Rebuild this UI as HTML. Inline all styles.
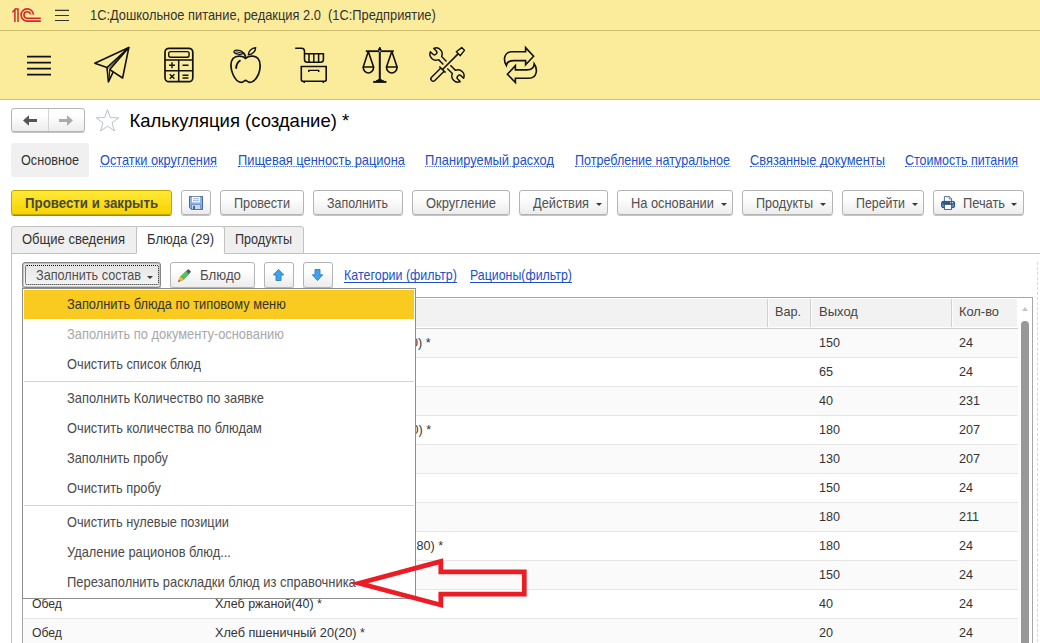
<!DOCTYPE html>
<html><head><meta charset="utf-8"><title>1C</title>
<style>
*{box-sizing:border-box;margin:0;padding:0}
html,body{width:1040px;height:643px;overflow:hidden;background:#fff;font-family:"Liberation Sans",sans-serif;font-size:13.9px;color:#3c3c3c}
.abs{position:absolute}
.sx{display:inline-block;transform-origin:0 50%;white-space:pre}
.sd{display:inline-block;transform-origin:0 50%;transform:scaleX(0.941)}
.sr{display:inline-block;transform-origin:100% 50%;transform:scaleX(0.941)}
svg{position:absolute;overflow:visible}
#titlebar{position:absolute;left:0;top:0;width:1040px;height:31px;background:#fbec9c;border-bottom:1px solid #cbbb6c}
#titlebar .t{position:absolute;left:90px;top:7.3px;font-size:13.9px;color:#333;white-space:pre}
#sections{position:absolute;left:0;top:31px;width:1040px;height:69px;background:#fbec9c;border-bottom:1px solid #cabd7e}
.btn{position:absolute;height:25px;border:1px solid #b4b4b4;border-radius:3px;background:linear-gradient(#ffffff 30%,#ececec);box-shadow:0 1px 0 #c4c4c4;}
.bt{position:absolute;margin-top:0.6px;font-size:13.9px;color:#505050;white-space:nowrap;line-height:15px}
.lnk{position:absolute;top:152.7px;font-size:13.9px;color:#2050c8;white-space:nowrap;line-height:15px;height:14.3px}
.lnk .sx{border-bottom:1px dotted #2050c8;height:14.3px}
.lnk2 .sx{text-decoration:underline;text-decoration-skip-ink:none;text-decoration-thickness:1px;text-underline-offset:1.5px}
.lnk2{position:absolute;top:267.6px;font-size:13.9px;color:#2050c8;white-space:nowrap;text-decoration:underline;line-height:15px}
.caret{position:absolute;width:0;height:0;border-left:3px solid transparent;border-right:3px solid transparent;border-top:3px solid #3a3a3a;margin-top:1.4px;margin-left:0.3px}
.tab{position:absolute;top:226px;height:28px;border:1px solid #c2c2c2;background:#efefef}
.row{position:absolute;left:23px;width:995px;height:29px;border-bottom:1px solid #e6e6e6;font-size:13.4px;color:#333}
.row>span{position:absolute;top:6.45px;white-space:nowrap;line-height:15px}
.hd{margin-top:-0.64px;font-size:13.4px;color:#444;white-space:nowrap;line-height:15px}
.mi{position:absolute;left:67px;margin-top:0.6px;font-size:13.9px;color:#4a4a4a;white-space:nowrap;line-height:15px}
</style></head><body>
<div id="titlebar"><div class="t"><span class="sx" style="transform:scaleX(0.9251)">1С:Дошкольное питание, редакция 2.0  (1С:Предприятие)</span></div></div>
<div id="sections"></div>
<div class="btn" style="left:11px;top:108px;width:74px;height:24px"></div>
<div class="abs" style="left:48px;top:109px;width:1px;height:22px;background:#d4d4d4"></div>
<div class="abs" style="left:129.5px;top:110px;font-size:18.5px;color:#000;white-space:nowrap;line-height:22px">Калькуляция (создание) *</div>
<div class="abs" style="left:11px;top:143px;width:78px;height:34px;background:#f0f0f0;border-radius:3px"></div>
<div class="bt" style="left:21px;top:152px;color:#333"><span class="sx" style="transform:scaleX(0.9107)">Основное</span></div>
<div class="lnk" style="left:100px"><span class="sx" style="transform:scaleX(0.9185)">Остатки округления</span></div>
<div class="lnk" style="left:238px"><span class="sx" style="transform:scaleX(0.9253)">Пищевая ценность рациона</span></div>
<div class="lnk" style="left:425px"><span class="sx" style="transform:scaleX(0.9261)">Планируемый расход</span></div>
<div class="lnk" style="left:575px"><span class="sx" style="transform:scaleX(0.9029)">Потребление натуральное</span></div>
<div class="lnk" style="left:750px"><span class="sx" style="transform:scaleX(0.9245)">Связанные документы</span></div>
<div class="lnk" style="left:905px"><span class="sx" style="transform:scaleX(0.8993)">Стоимость питания</span></div>
<div class="btn" style="left:11px;top:190px;width:161px;background:linear-gradient(#ffe838,#f7d400);border-color:#c4a600;box-shadow:0 1px 0 #a08800"></div>
<div class="bt" style="left:25px;top:195px;font-weight:bold;color:#4a4838;font-size:14px"><span class="sx" style="transform:scaleX(0.948)">Провести и закрыть</span></div>
<div class="btn" style="left:181px;top:190px;width:30px"></div>
<div class="btn" style="left:220px;top:190px;width:84px"></div>
<div class="bt" style="left:234px;top:195px"><span class="sx" style="transform:scaleX(0.9107)">Провести</span></div>
<div class="btn" style="left:313px;top:190px;width:90px"></div>
<div class="bt" style="left:327px;top:195px"><span class="sx" style="transform:scaleX(0.8939)">Заполнить</span></div>
<div class="btn" style="left:412px;top:190px;width:98px"></div>
<div class="bt" style="left:426px;top:195px"><span class="sx" style="transform:scaleX(0.9309)">Округление</span></div>
<div class="btn" style="left:519px;top:190px;width:89px"></div>
<div class="bt" style="left:533px;top:195px"><span class="sx" style="transform:scaleX(0.9195)">Действия</span></div>
<div class="caret" style="left:596px;top:202px"></div>
<div class="btn" style="left:617px;top:190px;width:116px"></div>
<div class="bt" style="left:631px;top:195px"><span class="sx" style="transform:scaleX(0.9234)">На основании</span></div>
<div class="caret" style="left:721px;top:202px"></div>
<div class="btn" style="left:742px;top:190px;width:91px"></div>
<div class="bt" style="left:756px;top:195px"><span class="sx" style="transform:scaleX(0.9076)">Продукты</span></div>
<div class="caret" style="left:820px;top:202px"></div>
<div class="btn" style="left:842px;top:190px;width:82px"></div>
<div class="bt" style="left:856px;top:195px"><span class="sx" style="transform:scaleX(0.8896)">Перейти</span></div>
<div class="caret" style="left:912px;top:202px"></div>
<div class="btn" style="left:933px;top:190px;width:91px"></div>
<div class="bt" style="left:963px;top:195px"><span class="sx" style="transform:scaleX(0.9224)">Печать</span></div>
<div class="caret" style="left:1011px;top:202px"></div>
<div class="abs" style="left:11px;top:253px;width:1029px;height:400px;border-top:1px solid #c2c2c2;border-left:1px solid #c2c2c2"></div>
<div class="tab" style="left:11px;width:126px;border-radius:3px 0 0 0"></div>
<div class="tab" style="left:224px;width:80px;border-radius:0 3px 0 0"></div>
<div class="tab" style="left:136px;width:89px;background:#fff;border-bottom-color:#fff;border-radius:3px 3px 0 0"></div>
<div class="bt" style="left:22px;top:231.6px;color:#333"><span class="sx" style="transform:scaleX(0.9365)">Общие сведения</span></div>
<div class="bt" style="left:147px;top:231.6px;color:#333"><span class="sx" style="transform:scaleX(0.9355)">Блюда (29)</span></div>
<div class="bt" style="left:235px;top:231.6px;color:#333"><span class="sx" style="transform:scaleX(0.9076)">Продукты</span></div>
<div class="btn" style="left:22px;top:262px;height:25.5px;width:139px;border-color:#858585;box-shadow:0 1px 0 #9a9a9a,inset 0 0 0 0.5px #a0a0a0;background:linear-gradient(#e4e4e4,#f6f6f6)"></div>
<div class="abs" style="left:25px;top:265px;width:134px;height:20px;border:1px dotted #111;border-radius:2px"></div>
<div class="bt" style="left:36px;top:267.3px"><span class="sx" style="transform:scaleX(0.9114)">Заполнить состав</span></div><div class="caret" style="left:147px;top:274.4px"></div>
<div class="btn" style="left:170px;top:262px;height:25.5px;width:85px"></div><div class="bt" style="left:200px;top:267.3px"><span class="sx" style="transform:scaleX(0.9526)">Блюдо</span></div>
<div class="btn" style="left:264px;top:262px;height:25.5px;width:30px"></div>
<div class="btn" style="left:303px;top:262px;height:25.5px;width:30px"></div>
<div class="lnk2" style="left:344px"><span class="sx" style="transform:scaleX(0.8975)">Категории (фильтр)</span></div>
<div class="lnk2" style="left:470px"><span class="sx" style="transform:scaleX(0.8909)">Рационы(фильтр)</span></div>
<div class="abs" style="left:22px;top:297px;width:1011px;height:350px;border:1px solid #a6a6a6;border-bottom:none"></div>
<div class="abs" style="left:23px;top:299px;width:994px;height:28px;background:#f2f2f2"></div><div class="abs" style="left:23px;top:328px;width:995px;height:1px;background:#cfcfcf"></div>
<div class="abs" style="left:767px;top:299px;width:1px;height:28px;background:#d0d0d0"></div><div class="abs" style="left:768px;top:299px;width:1px;height:28px;background:#fcfcfc"></div>
<div class="abs" style="left:810px;top:299px;width:1px;height:28px;background:#d0d0d0"></div><div class="abs" style="left:811px;top:299px;width:1px;height:28px;background:#fcfcfc"></div>
<div class="abs" style="left:951px;top:299px;width:1px;height:28px;background:#d0d0d0"></div><div class="abs" style="left:952px;top:299px;width:1px;height:28px;background:#fcfcfc"></div>
<div class="abs hd" style="left:775px;top:305px"><span class="sx" style="transform:scaleX(0.9432)">Вар.</span></div><div class="abs hd" style="left:819px;top:305px"><span class="sx" style="transform:scaleX(0.9727)">Выход</span></div><div class="abs hd" style="left:959px;top:305px"><span class="sx" style="transform:scaleX(0.9600)">Кол-во</span></div>
<div class="row" style="top:329px;background:#fafafa"><span class="sr" style="right:587px">Каша молочная (150) *</span><span class="sd" style="left:796px">150</span><span class="sd" style="left:936px">24</span></div>
<div class="row" style="top:358px;background:#fff"><span class="sd" style="left:796px">65</span><span class="sd" style="left:936px">24</span></div>
<div class="row" style="top:387px;background:#fafafa"><span class="sd" style="left:796px">40</span><span class="sd" style="left:936px">231</span></div>
<div class="row" style="top:416px;background:#fff"><span class="sr" style="right:587px">Чай с сахаром (180) *</span><span class="sd" style="left:796px">180</span><span class="sd" style="left:936px">207</span></div>
<div class="row" style="top:445px;background:#fafafa"><span class="sd" style="left:796px">130</span><span class="sd" style="left:936px">207</span></div>
<div class="row" style="top:474px;background:#fff"><span class="sd" style="left:796px">150</span><span class="sd" style="left:936px">24</span></div>
<div class="row" style="top:503px;background:#fafafa"><span class="sd" style="left:796px">180</span><span class="sd" style="left:936px">211</span></div>
<div class="row" style="top:532px;background:#fff"><span class="sr" style="right:575px">Компот из сухофруктов(180) *</span><span class="sd" style="left:796px">180</span><span class="sd" style="left:936px">24</span></div>
<div class="row" style="top:561px;background:#fafafa"><span class="sd" style="left:796px">150</span><span class="sd" style="left:936px">24</span></div>
<div class="row" style="top:590px;background:#fff"><span style="left:9px"><span class="sx" style="transform:scaleX(0.9112)">Обед</span></span><span style="left:192px"><span class="sx" style="transform:scaleX(0.9351)">Хлеб ржаной(40) *</span></span><span class="sd" style="left:796px">40</span><span class="sd" style="left:936px">24</span></div>
<div class="row" style="top:619px;background:#fafafa"><span style="left:9px"><span class="sx" style="transform:scaleX(0.9112)">Обед</span></span><span style="left:192px"><span class="sx" style="transform:scaleX(0.9452)">Хлеб пшеничный 20(20) *</span></span><span class="sd" style="left:796px">20</span><span class="sd" style="left:936px">24</span></div>
<div class="abs" style="left:1021px;top:321px;width:8px;height:330px;background:#989898;border-radius:4px"></div>
<div class="abs" style="left:1022px;top:307px;width:0;height:0;border-left:3px solid transparent;border-right:3px solid transparent;border-bottom:4px solid #c4c4c4"></div>
<div class="abs" style="left:1037px;top:262px;width:0;height:390px;border-left:1px dashed #d8d8d8"></div>
<!-- 1C logo -->
<svg style="left:0;top:0" width="90" height="30" fill="none" stroke="#d8232a" stroke-width="1.6">
<path d="M12.4 12.2 L14.9 9.6 L14.9 21.9 M18 8.3 L18 21.9 M14.6 9 L18 9" stroke-width="1.5"/>
<path d="M33.4 14.8 A6.15 6.15 0 1 0 27.3 21.15 L40.8 21.15"/>
<path d="M30.5 14.4 A3.3 3.3 0 1 0 27.3 18.3 L40.8 18.3"/>
</svg>
<!-- small hamburger -->
<svg style="left:0;top:0" width="90" height="30" stroke="#333" stroke-width="1.2"><path d="M55 10.4H69M55 15.5H69M55 20.5H69"/></svg>
<!-- big hamburger -->
<svg style="left:0;top:31px" width="80" height="69" stroke="#111" stroke-width="1.8"><path d="M27 25.7H51M27 31.7H51M27 37.7H51M27 43.7H51"/></svg>
<!-- paper plane -->
<svg style="left:0;top:0" width="140" height="100" fill="none" stroke="#111" stroke-width="1.6" stroke-linejoin="round">
<path d="M128.8 47.6 L94.8 63.2 L107 67.6 Z"/>
<path d="M128.8 47.6 L109.8 69.6 L122.6 78 Z"/>
<path d="M107 67.6 L108.4 82 L113.2 71.9" />
<path d="M109.8 69.6 L109 79.5" stroke-width="1.1"/>
<path d="M127.5 49.2 L108.5 68.6" stroke-width="0.6"/>
</svg>
<!-- calculator -->
<svg style="left:0;top:0" width="200" height="100" fill="none" stroke="#111" stroke-width="1.7">
<rect x="165" y="48.3" width="27.8" height="33.4" rx="4"/>
<rect x="168.7" y="51.6" width="20.4" height="5.6" rx="2" stroke-width="1.4"/>
<path d="M165 60H192.8M165 70.8H192.8M178.7 60V81.7" stroke-width="1.5"/>
<path d="M169 65.3H175M172 62.3V68.3 M182.5 65.3H188.5 M169.8 74.2L174.4 78.8M174.4 74.2L169.8 78.8 M182.5 75.2H188.5M182.5 78H188.5" stroke-width="1.4"/>
</svg>
<!-- apple -->
<svg style="left:0;top:0" width="270" height="100" fill="none" stroke="#14141c" stroke-width="1.75" stroke-linecap="round">
<path d="M245.6 58.4 C243 56 236.5 55 233 58.5 C230 62 230.5 69 233 74.5 C235 79 238 82.5 241.5 82.3 C243.5 82.2 244.5 80.4 245.6 80.4 C246.7 80.4 247.7 82.2 249.7 82.3 C253.2 82.5 256.2 79 258.4 74.5 C260.6 69 261 62 258 58.5 C254.7 55 248.2 56 245.6 58.4 Z"/>
<path d="M245.5 58.2 C245.6 55.6 244.8 53.6 242.6 52.6"/>
<ellipse cx="238.4" cy="52.2" rx="4.5" ry="1.9" transform="rotate(12 238.4 52.2)" stroke-width="1.3"/>
<path d="M236 51.8 L241.5 52.9" stroke-width="0.9"/>
<path d="M248.4 54.8 C248.4 51 251.6 47.9 255.6 47.7 C255.6 51.5 252.3 54.6 248.4 54.8 Z" stroke-width="1.4"/>
<path d="M239.9 60.8 C237.5 62.5 236.2 65 236.2 68" stroke-width="1.9"/>
</svg>
<!-- cart -->
<svg style="left:0;top:0" width="340" height="100" fill="none" stroke="#111" stroke-width="1.6">
<path d="M295.2 48.2 H301.5 Q304.5 48.2 304.5 51.2 V59.5 Q304.5 62.3 307.3 62.3 H320.5 Q323.4 62.3 323.4 59.5 V53.8 H304.5"/>
<path d="M309 53.8V62.3M313.8 53.8V62.3M318.6 53.8V62.3" stroke-width="1.5"/>
<path d="M301.3 66.5 H326.2 V79.5 Q326.2 81.3 324.4 81.3 H303.1 Q301.3 81.3 301.3 79.5 Z"/>
<path d="M304.2 81.5V83M323.3 81.5V83"/>
<path d="M308.8 72V70.4H318.7V72" stroke-width="1.4"/>
</svg>
<!-- scales -->
<svg style="left:0;top:0" width="410" height="100" fill="none" stroke="#111" stroke-width="1.6">
<path d="M379.8 48.5V81.5" stroke-width="2"/>
<path d="M379.8 47 L381.2 50 H378.4 Z" fill="#111" stroke-width="1"/>
<path d="M365.8 51.2H393.8" stroke-width="1.8"/>
<path d="M373.2 81.9H386.4" stroke-width="2"/>
<path d="M376 81 L379.8 79 L383.6 81 Z" fill="#111" stroke-width="1"/>
<path d="M368.3 51.5 L363.2 67 H373.6 Z" stroke-linejoin="round"/>
<path d="M363.2 67 A5.2 6 0 0 0 373.6 67"/>
<path d="M391.8 51.5 L386.5 67 H397.1 Z" stroke-linejoin="round"/>
<path d="M386.5 67 A5.3 6 0 0 0 397.1 67"/>
<circle cx="379.8" cy="51.2" r="1" fill="#999" stroke="none"/>
</svg>
<!-- tools -->
<svg style="left:0;top:0" width="480" height="100" fill="none" stroke="#111" stroke-width="1.45" stroke-linejoin="round" stroke-linecap="butt">
<g transform="translate(447,65) rotate(225)"><path d="M2.9 -2.2 L9.81 -2.2 A6.1 6.1 0 0 1 21.11 -2.4 L17.8 -2.4 A2.4 2.4 0 0 0 17.8 2.4 L21.11 2.4 A6.1 6.1 0 0 1 9.81 2.2 L2.9 2.2"/></g>
<g transform="translate(447,65) rotate(45)"><path d="M2.6 -2.2 L9.81 -2.2 A6.1 6.1 0 0 1 21.11 -2.4 L17.8 -2.4 A2.4 2.4 0 0 0 17.8 2.4 L21.11 2.4 A6.1 6.1 0 0 1 9.81 2.2 L2.6 2.2"/></g>
<g transform="translate(447,65) rotate(-45)">
<path d="M-6.4 -2.3 L-19.5 -2.3 A2.3 2.3 0 0 0 -19.5 2.3 L-6.4 2.3"/>
<path d="M-6.4 -4.4 L-6.4 4.4"/>
<path d="M-6.4 0 L16 0" stroke-width="1.6"/>
<path d="M16 -2.8 L22.7 -1.95 L22.7 1.95 L16 2.8 Z"/>
</g>
</svg>
<!-- exchange -->
<svg style="left:0;top:0" width="560" height="100" fill="none" stroke="#111" stroke-width="1.6" stroke-linejoin="miter">
<path d="M506.4 65.5 C503 60 504 51.8 512 51.8 H525.6 V47.6 L533.6 56.2 L525.6 64.8 V60.6 H514 C509 60.6 506.8 62.5 506.4 65.5 Z"/>
<path d="M534.2 63.8 C538 69.5 537 78.2 529 78.2 H515.4 V82.6 L507.4 74.2 L515.4 65.6 V69.9 H527 C532 69.9 534 67.5 534.2 63.8 Z"/>
</svg>
<!-- back/forward arrows -->
<svg style="left:0;top:100px" width="140" height="40">
<path d="M23 20.5 L29 15.2 V19 H37 V22 H29 V25.8 Z" fill="#555"/>
<path d="M73 20.5 L67 15.2 V19 H59 V22 H67 V25.8 Z" fill="#aaa"/>
<path d="M107.5 9.6 L110.3 17.6 L118.8 17.8 L112 22.9 L114.5 31 L107.5 26.2 L100.5 31 L103 22.9 L96.2 17.8 L104.7 17.6 Z" fill="#fff" stroke="#b9c1c9" stroke-width="1"/>
</svg>
<!-- floppy -->
<svg style="left:189px;top:196px" width="15" height="15">
<path d="M0.5 0.5 H13.5 V13.5 H2.5 L0.5 11.5 Z" fill="#8ab0e4" stroke="#3f66a6" stroke-width="1"/>
<path d="M2.5 0.5H11.5" stroke="#7f8c98" stroke-width="1"/>
<rect x="3" y="1" width="8" height="5.4" fill="#fff"/>
<path d="M4 2.7H10M4 4.7H10" stroke="#86a8d8" stroke-width="0.9"/>
<rect x="2.2" y="8" width="9.8" height="5.6" fill="#5f88c8"/>
<rect x="3" y="8.8" width="8.2" height="4.4" fill="#d0d8d6"/>
<rect x="4.1" y="9.8" width="1.9" height="3.4" fill="#3462ac"/>
<path d="M3 13.5H11.5" stroke="#66707c" stroke-width="0.8"/>
</svg>
<!-- printer -->
<svg style="left:940px;top:195px" width="16" height="16">
<path d="M4.4 6.5 V1.6 H9.4 L11.6 3.8 V6.5" fill="#fff" stroke="#44607e" stroke-width="0.9"/>
<path d="M9.2 1.8 V4 H11.4" fill="none" stroke="#5a7490" stroke-width="0.8"/>
<rect x="1.6" y="6.4" width="13" height="6.2" rx="1.4" fill="#5c8cc6" stroke="#1f4a7c" stroke-width="1"/>
<rect x="2.1" y="6.9" width="12" height="1.9" fill="#2c5c94"/>
<rect x="3.2" y="8.5" width="9.8" height="0.9" fill="#1c3f68"/>
<rect x="4.4" y="9.4" width="7.2" height="5" fill="#fff" stroke="#3c5876" stroke-width="0.9"/>
<rect x="10.1" y="7.2" width="1.1" height="1" fill="#fff"/><rect x="12" y="7.2" width="1.1" height="1" fill="#fff"/>
</svg>
<!-- pencil -->
<svg style="left:0;top:0" width="200" height="290">
<g transform="translate(178.2,281.9) rotate(-45)">
<path d="M0 0 L6 -2.5 L6 2.5 Z" fill="#f5b944" stroke="#c98a2a" stroke-width="0.5"/>
<path d="M0 0 L2 -0.84 L2 0.84 Z" fill="#5a3a14"/>
<rect x="6" y="-2" width="7.2" height="4" fill="#4fc463" stroke="#2f9a48" stroke-width="0.6"/>
<rect x="13.2" y="-2" width="3.2" height="4" rx="0.8" fill="#4a5869"/>
</g>
</svg>
<!-- up/down arrows -->
<svg style="left:0;top:0" width="340" height="290"><path d="M278.5 269.4 L283.7 275 H281 V280.5 H276 V275 H273.3 Z" fill="#3ea3ea" stroke="#2a7ec4" stroke-width="0.9" stroke-linejoin="round"/>
<path d="M317.5 280.6 L322.7 274.8 H320 V269.5 H315 V274.8 H312.3 Z" fill="#3ea3ea" stroke="#2a7ec4" stroke-width="0.9" stroke-linejoin="round"/></svg>

<div class="abs" style="left:22px;top:288px;width:394px;height:311px;background:#fff;border:1px solid #8e8e8e"></div>
<div class="abs" style="left:24px;top:290px;width:390px;height:29px;background:#f9ca1f"></div>
<div class="abs" style="left:24px;top:381px;width:390px;height:1px;background:#dad4be"></div>
<div class="abs" style="left:24px;top:505px;width:390px;height:1px;background:#dad4be"></div>
<div class="mi" style="top:296px;color:#333"><span class="sx" style="transform:scaleX(0.9250)">Заполнить блюда по типовому меню</span></div>
<div class="mi" style="top:326px;color:#a8a8a8"><span class="sx" style="transform:scaleX(0.9271)">Заполнить по документу-основанию</span></div>
<div class="mi" style="top:356px;"><span class="sx" style="transform:scaleX(0.9237)">Очистить список блюд</span></div>
<div class="mi" style="top:390px;"><span class="sx" style="transform:scaleX(0.9261)">Заполнить Количество по заявке</span></div>
<div class="mi" style="top:420px;"><span class="sx" style="transform:scaleX(0.9237)">Очистить количества по блюдам</span></div>
<div class="mi" style="top:450px;"><span class="sx" style="transform:scaleX(0.9207)">Заполнить пробу</span></div>
<div class="mi" style="top:480px;"><span class="sx" style="transform:scaleX(0.9219)">Очистить пробу</span></div>
<div class="mi" style="top:514px;"><span class="sx" style="transform:scaleX(0.9193)">Очистить нулевые позиции</span></div>
<div class="mi" style="top:544px;"><span class="sx" style="transform:scaleX(0.9250)">Удаление рационов блюд...</span></div>
<div class="mi" style="top:574px;"><span class="sx" style="transform:scaleX(0.9317)">Перезаполнить раскладки блюд из справочника</span></div>
<svg style="left:0;top:0" width="1040" height="643"><path d="M359 583.3 L440.8 561.4 L440.8 571.8 L524.3 571.8 L524.3 594.2 L440.8 594.2 L440.8 605 Z" fill="none" stroke="#ec1c24" stroke-width="4.7" stroke-linejoin="miter"/></svg>
</body></html>
